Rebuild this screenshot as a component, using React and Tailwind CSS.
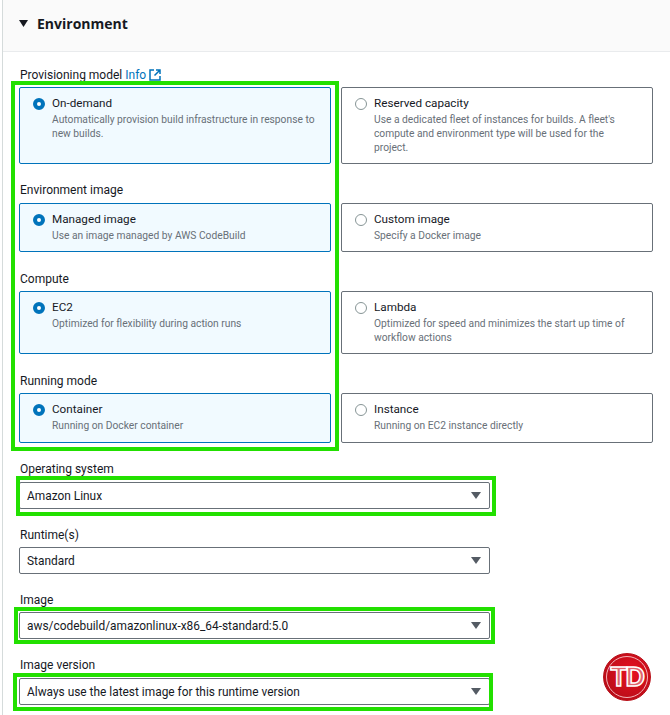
const font = "font-['Roboto',sans-serif]"

function Radio({ checked }) {
  if (checked) {
    return <span className="mt-[2px] w-3 h-3 shrink-0 rounded-full border-[4px] border-[#0073bb] bg-white" />
  }
  return <span className="mt-[2px] w-3 h-3 shrink-0 rounded-full border border-[#879596] bg-white" />
}

function Card({ title, desc, checked, height }) {
  return (
    <div
      className={`flex gap-[7px] pl-[13px] pr-2 pt-[8px] rounded-[2px] border ${height} ${
        checked ? 'border-[#0073bb] bg-[#f1faff]' : 'border-[#687078] bg-white'
      }`}
    >
      <Radio checked={checked} />
      <div>
        <div className="text-[11.7px] leading-[15px] text-[#16191f]">{title}</div>
        <div className="mt-[2px] max-w-[265px] text-[10.25px] leading-[14px] text-[#687078]">{desc}</div>
      </div>
    </div>
  )
}

function Group({ label, children, className }) {
  return (
    <div className={className}>
      <div className="pl-[1px] text-[12px] leading-[16px] text-[#16191f]">{label}</div>
      {children}
    </div>
  )
}

function Select({ value, className }) {
  return (
    <div className={`${className} h-[27px] w-[471px] flex items-center justify-between pl-[7px] pr-[8px] border border-[#687078] rounded-[2px] bg-white`}>
      <span className="pt-[2px] text-[11.9px] text-[#16191f]">{value}</span>
      <svg width="10" height="7" viewBox="0 0 10 7">
        <path d="M0 0h10L5 7z" fill="#545b64" />
      </svg>
    </div>
  )
}

function ExternalIcon() {
  return (
    <svg width="12" height="12" viewBox="0 0 12 12" fill="none" stroke="#0073bb" strokeWidth="1.5">
      <path d="M5 1H1v10h10V7" />
      <path d="M7 1h4v4M11 1L5.5 6.5" />
    </svg>
  )
}

function Highlight({ className }) {
  return <div className={`absolute border-[4px] border-[#22e000] pointer-events-none ${className}`} />
}

function Badge() {
  return (
    <div className="absolute left-[603px] top-[653px] w-[48px] h-[48px] rounded-full border border-[#b80f18] bg-[radial-gradient(circle_at_60%_40%,#e8101f,#a80c16)] flex items-center justify-center">
      <div className="absolute inset-[2px] rounded-full border border-[#f3b4b8]" />
      <span className="font-['Liberation_Sans',sans-serif] font-bold text-[27px] tracking-[-1.5px] text-[#e0656c] [-webkit-text-stroke:1.5px_#ffffff]">TD</span>
    </div>
  )
}

export default function App() {
  return (
    <div className={`relative w-[670px] h-[715px] overflow-hidden bg-white ${font}`}>
      <div className="ml-[2px] h-full border-l border-[#d5dbdb]">
        <div className="h-[52px] flex items-center gap-[9px] pl-[16px] pb-[4px] bg-[#fafafa] border-b border-[#e9ebed]">
          <svg width="9" height="7" viewBox="0 0 9 7">
            <path d="M0 0h9L4.5 7z" fill="#16191f" />
          </svg>
          <h2 className="font-['Open_Sans',sans-serif] text-[14px] font-bold text-[#16191f]">Environment</h2>
        </div>

        <div className="pl-[16px] pt-[15px]">
          <div className="flex items-center gap-[3px] text-[12px] leading-[16px] text-[#16191f]">
            <span className="ml-[1px]">Provisioning model</span>
            <span className="text-[#0073bb]">Info</span>
            <ExternalIcon />
          </div>
          <div className="mt-[4px] grid grid-cols-[312px_312px] gap-[10px]">
            <Card checked height="h-[77px]" title="On-demand" desc="Automatically provision build infrastructure in response to new builds." />
            <Card height="h-[77px]" title="Reserved capacity" desc="Use a dedicated fleet of instances for builds. A fleet's compute and environment type will be used for the project." />
          </div>

          <Group label="Environment image" className="mt-[18px]">
            <div className="mt-[5px] grid grid-cols-[312px_312px] gap-[10px]">
              <Card checked height="h-[49px]" title="Managed image" desc="Use an image managed by AWS CodeBuild" />
              <Card height="h-[49px]" title="Custom image" desc="Specify a Docker image" />
            </div>
          </Group>

          <Group label="Compute" className="mt-[19px]">
            <div className="mt-[4px] grid grid-cols-[312px_312px] gap-[10px]">
              <Card checked height="h-[63px]" title="EC2" desc="Optimized for flexibility during action runs" />
              <Card height="h-[63px]" title="Lambda" desc="Optimized for speed and minimizes the start up time of workflow actions" />
            </div>
          </Group>

          <Group label="Running mode" className="mt-[19px]">
            <div className="mt-[4px] grid grid-cols-[312px_312px] gap-[10px]">
              <Card checked height="h-[50px]" title="Container" desc="Running on Docker container" />
              <Card height="h-[50px]" title="Instance" desc="Running on EC2 instance directly" />
            </div>
          </Group>

          <Group label="Operating system" className="mt-[18px]">
            <Select value="Amazon Linux" className="mt-[5px]" />
          </Group>
          <Group label="Runtime(s)" className="mt-[18px]">
            <Select value="Standard" className="mt-[4px]" />
          </Group>
          <Group label="Image" className="mt-[18px]">
            <Select value="aws/codebuild/amazonlinux-x86_64-standard:5.0" className="mt-[4px]" />
          </Group>
          <Group label="Image version" className="mt-[18px]">
            <Select value="Always use the latest image for this runtime version" className="mt-[5px]" />
          </Group>
        </div>
      </div>

      <Highlight className="left-[11px] top-[81px] w-[328px] h-[370px]" />
      <Highlight className="left-[16px] top-[476px] w-[480px] h-[40px]" />
      <Highlight className="left-[14px] top-[607px] w-[481px] h-[37px]" />
      <Highlight className="left-[13px] top-[673px] w-[480px] h-[38px]" />
      <Badge />
    </div>
  )
}
